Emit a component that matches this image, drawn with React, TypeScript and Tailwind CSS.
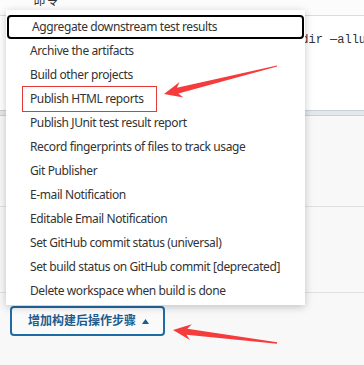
import React from 'react';

const ITEMS = [
  'Aggregate downstream test results',
  'Archive the artifacts',
  'Build other projects',
  'Publish HTML reports',
  'Publish JUnit test result report',
  'Record fingerprints of files to track usage',
  'Git Publisher',
  'E-mail Notification',
  'Editable Email Notification',
  'Set GitHub commit status (universal)',
  'Set build status on GitHub commit [deprecated]',
  'Delete workspace when build is done',
];

function Arrows() {
  return (
    <svg className="pointer-events-none absolute left-0 top-0" width="364" height="365" viewBox="0 0 364 365" aria-hidden>
      <polygon
        points="164,94 183.4,97.5 178.3,93.5 277.1,66.6 276.9,65.4 176.9,87.7 179.6,81.9"
        fill="#f53b3b"
      />
      <polygon
        points="173,330 189.9,340.1 186.5,334.7 276.9,343.8 277.1,342.2 187.3,328.7 191.9,324.3"
        fill="#f53b3b"
      />
    </svg>
  );
}

function PostBuildMenu() {
  return (
    <div className="absolute left-[6px] top-[10px] h-[295px] w-[299px] bg-white pt-[5px] shadow-[0_2px_8px_rgba(0,0,0,0.22)]">
      <ul className="flex flex-col px-[1px]">
        {ITEMS.map((label, i) => (
          <li
            key={label}
            className={`flex h-[24px] items-center pl-[23px] text-[12px] tracking-[-0.4px] text-[#333] ${
              i === 0 ? 'rounded-[4px] border-2 border-black pl-[21px]' : ''
            }`}
          >
            {label}
          </li>
        ))}
      </ul>
      {/* annotation box */}
      <div className="absolute left-[16px] top-[76px] h-[26px] w-[135px] border border-[#e53935]" />
    </div>
  );
}

export default function App() {
  return (
    <div
      className="relative h-[365px] w-[364px] overflow-hidden bg-[#f8f8f8]"
      style={{ fontFamily: '"Noto Sans", "Noto Sans CJK SC", sans-serif' }}
    >
      <div className="h-[16px] border-b border-[#dcdcdc] bg-[#fcfcfc] pl-[33px]">
        <span className="relative top-[-14px] text-[13px] text-[#333]">命令</span>
      </div>
      <div className="h-[94px] bg-white pl-[6px] pt-[9px]">
        <span className="whitespace-nowrap text-[12px] leading-[16px] text-[#333]" style={{ fontFamily: '"Liberation Mono", monospace' }}>
          python3 -m pytest ./testcases -s --alluredir —allure-results
        </span>
      </div>
      <div className="h-[6px] border-y border-[#c9d0d6] bg-[#e3e8ec]" />
      <div className="h-[91px] border-b border-[#e0e0e0]" />
      <div className="h-[86px] border-b border-[#e0e0e0]" />
      <div className="pl-[10px] pt-[13px]">
        <button
          type="button"
          className="flex h-[30px] w-[155px] items-center gap-[6px] rounded-[4px] border-2 border-[#1f6ba3] bg-[#fafafa] pl-[16px] text-[12px] font-semibold text-[#1c5c8e]"
        >
          增加构建后操作步骤
          <svg width="7" height="5" viewBox="0 0 7 5" aria-hidden>
            <path d="M0 5 L3.5 0 L7 5 Z" fill="#1c5c8e" />
          </svg>
        </button>
      </div>
      <PostBuildMenu />
      <Arrows />
    </div>
  );
}
